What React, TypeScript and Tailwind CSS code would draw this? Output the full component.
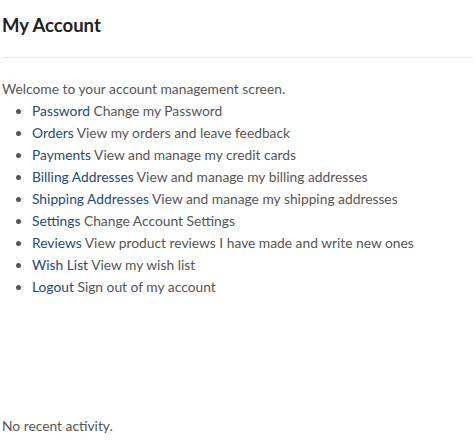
const links = [
  { label: 'Password', desc: 'Change my Password' },
  { label: 'Orders', desc: 'View my orders and leave feedback' },
  { label: 'Payments', desc: 'View and manage my credit cards' },
  { label: 'Billing Addresses', desc: 'View and manage my billing addresses' },
  { label: 'Shipping Addresses', desc: 'View and manage my shipping addresses' },
  { label: 'Settings', desc: 'Change Account Settings' },
  { label: 'Reviews', desc: 'View product reviews I have made and write new ones' },
  { label: 'Wish List', desc: 'View my wish list' },
  { label: 'Logout', desc: 'Sign out of my account' },
]

export default function App() {
  return (
    <div className="px-[2px] text-[13.8px] leading-[22px] text-[#555555]" style={{ fontFamily: 'Lato, sans-serif' }}>
      <h1 className="pt-[13px] text-[18.5px] leading-[24px] font-bold text-[#222222]">My Account</h1>
      <hr className="mt-[20px] border-t border-[#e8e8e8]" />
      <p className="mt-[20px]">Welcome to your account management screen.</p>
      <ul className="list-disc pl-[30px]">
        {links.map((link) => (
          <li key={link.label}>
            <a href="#" className="text-[#264a72]">{link.label}</a> {link.desc}
          </li>
        ))}
      </ul>
      <p className="mt-[117px]">No recent activity.</p>
    </div>
  )
}
